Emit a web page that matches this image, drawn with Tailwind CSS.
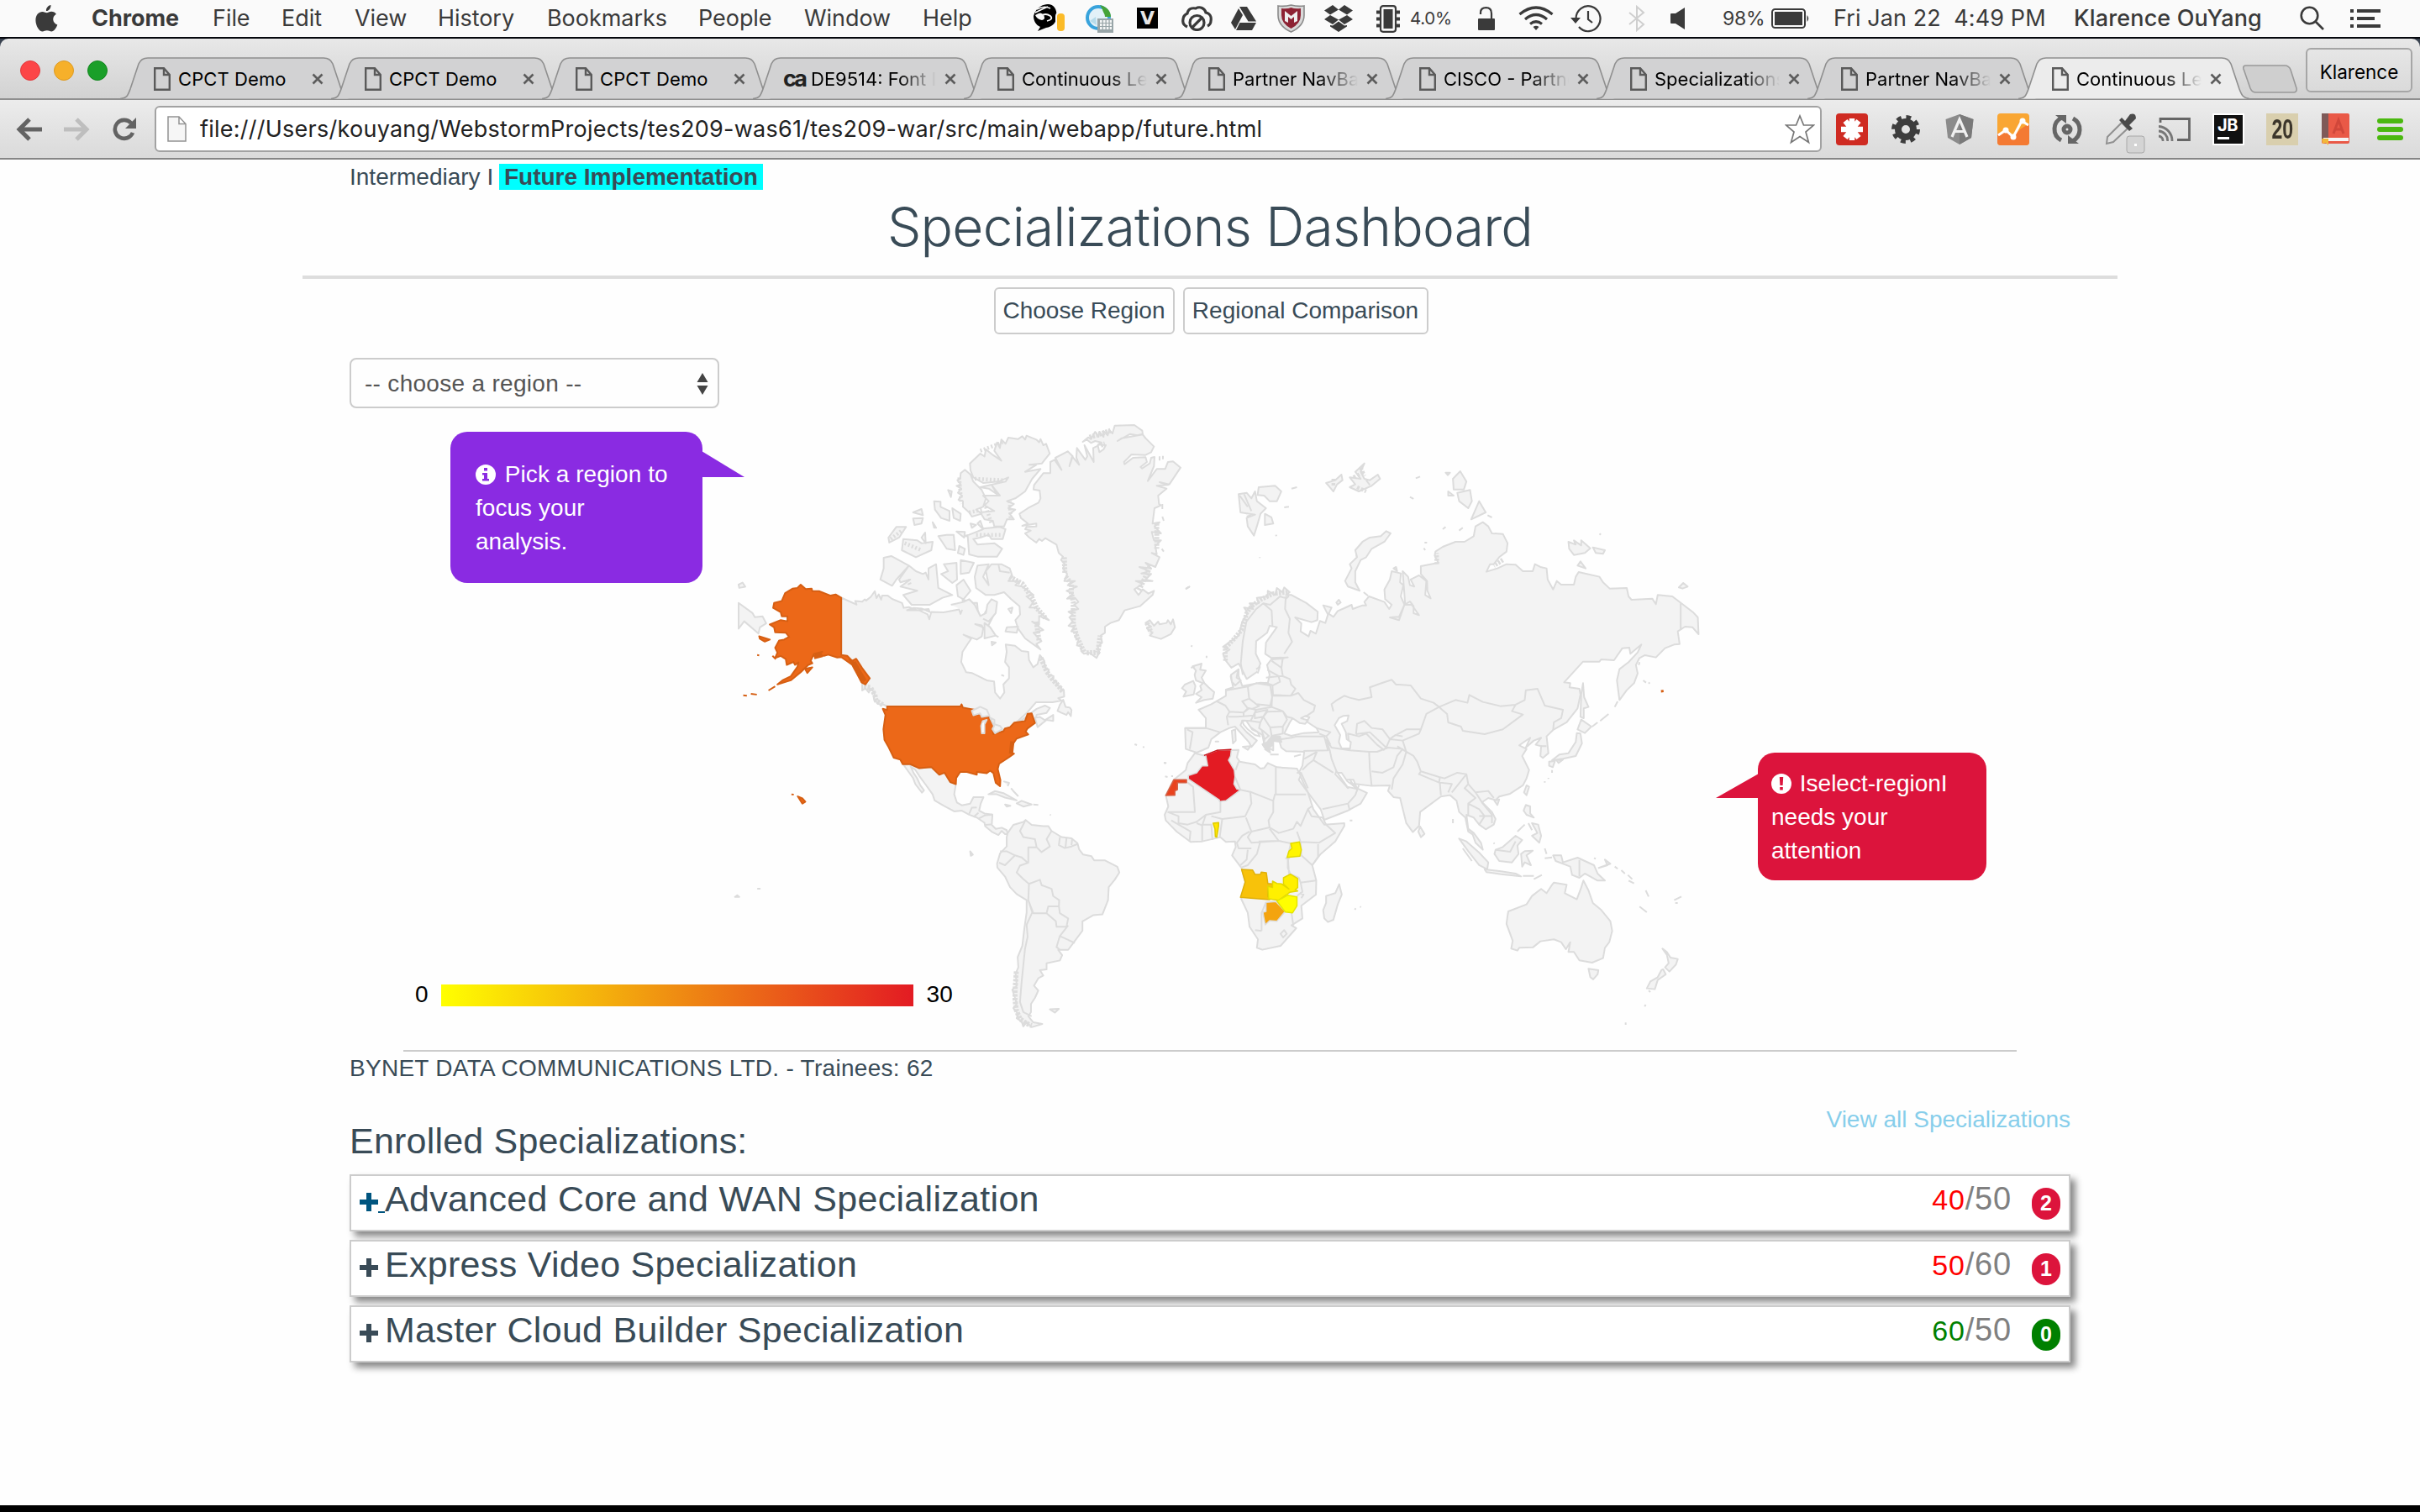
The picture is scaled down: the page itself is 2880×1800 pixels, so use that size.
<!DOCTYPE html>
<html lang="en">
<head>
<meta charset="utf-8">
<title>Specializations Dashboard</title>
<script src="https://cdn.jsdelivr.net/npm/@tailwindcss/browser@4"></script>
</head>
<body class="w-[2880px] h-[1800px] overflow-hidden bg-[#fefefe] font-['Liberation_Sans',Arial,sans-serif] text-[28px] leading-[40px] text-[#394b57]">

<!-- Symbols reused by the tabs -->
<svg class="hidden">
  <symbol id="page" viewBox="0 0 20 28"><path d="M1.2 1.2H12L18.8 9V26.8H1.2Z M12 1.2V9H18.8" fill="none" stroke="#5a5a5a" stroke-width="2.4"/></symbol>
  <symbol id="x" viewBox="0 0 16 16"><path d="M2.5 2.5L13.5 13.5M13.5 2.5L2.5 13.5" stroke="#5c5c5c" stroke-width="2.6"/></symbol>
  <symbol id="tab" viewBox="0 0 275 50"><path d="M0 49.5C8 49 9 46 12 38L22 8Q25 1 33 1H242Q250 1 253 8L263 38C266 46 268 49 275 49.5" stroke="#8f8f8f" stroke-width="1.6"/></symbol>
  <symbol id="plus" viewBox="0 0 22 22"><path d="M8 0H14V8H22V14H14V22H8V14H0V8H8Z"/></symbol>
</svg>

<!-- System menu bar -->
<header class="flex h-[46px] items-center border-b-2 border-[#05070d] bg-[#fafafa] pl-[42px] font-[Inter,sans-serif] text-[27px] leading-[44px] tracking-[-0.05px] whitespace-nowrap text-[#3a3a3a]">
  <div class="w-[67px]"><svg width="27" height="34" viewBox="0 0 27 34" fill="#3a3a3a"><path d="M18.5 1c.4 3.600-2.400 7.200-5.500 7.100C12.600 4.600 15.400 1.400 18.500 1ZM13.700 10.300c1.300 0 3-1.500 5.500-1.500 2.500 0 4.500 1.200 5.700 2.900-5.500 3.300-4.600 10.600 1.400 12.800-1.400 4-4.200 8-7 8-2 0-2.900-1.200-5.400-1.200S10.400 32.500 8.600 32.500C4.600 32.500.4 25.400.4 18.900c0-6.400 4-9.900 8-9.900 2.400 0 4 1.300 5.300 1.300Z"/></svg></div>
  <div class="w-[144px] font-bold">Chrome</div>
  <div class="w-[82px]">File</div>
  <div class="w-[87px]">Edit</div>
  <div class="w-[99px]">View</div>
  <div class="w-[130px]">History</div>
  <div class="w-[180px]">Bookmarks</div>
  <div class="w-[126px]">People</div>
  <div class="w-[141px]">Window</div>
  <div class="w-[132px]">Help</div>
  <div class="w-[62px]"><svg width="38" height="34" viewBox="0 0 38 34"><path d="M0 14C3 3 12 0 17 0C24 0 28 6 27.500 14C27.500 22 22 27 15 28L5 32L8 27C3 25 0 20 0 14Z" fill="#000"/><path d="M2 10Q10 6 17 3M4 6Q13 1 20 5" stroke="#fafafa" stroke-width="1.600" fill="none"/><path d="M2 13Q9 8 12 13Q15 18 10 19Q4 18 2 13Z" fill="#fafafa"/><path d="M9 14Q14 10 20 14Q24 18 16 20" stroke="#fafafa" stroke-width="1.800" fill="none"/><rect x="26" y="9" width="12" height="25" rx="5" fill="#fafafa"/><rect x="28" y="11" width="9" height="21" rx="4" fill="#fbbb28"/></svg></div>
  <div class="w-[61px]"><svg width="34" height="34" viewBox="0 0 34 34"><circle cx="15" cy="16" r="13" fill="#e2f1f8" stroke="#38a3dc" stroke-width="4"/><path d="M17 1C26 3 30 9 30 15H23C23 11 20 9 20 6Z" fill="#45a338"/><path d="M5 20L12 15L13 25Z" fill="#b6dbea"/><rect x="14" y="17" width="19" height="17" fill="#98a5a8"/><path d="M17 20.500H31M17 24.500H31M17 28.500H31" stroke="#f4f6f6" stroke-width="3" stroke-dasharray="2.600 1.300"/></svg></div>
  <div class="w-[53px]"><div class="h-[25px] w-[25px] -translate-y-px bg-black text-center font-['DejaVu_Sans',sans-serif] text-[22px] leading-[25px] font-bold text-[#e6e6e6]">V</div></div>
  <div class="w-[59px]"><svg width="37" height="30" viewBox="0 0 37 30" fill="none" stroke="#3a3a3a" stroke-width="3.200"><path d="M7 25C3 23 1 20 2 16C2 12 5 10 7 9C8 4 12 2 17 3C22 0 28 3 29 8C34 9 36 13 35 18C35 21 33 23 31 24"/><circle cx="18.500" cy="20" r="8.500"/><path d="M13 25.500L24 14.500"/></svg></div>
  <div class="w-[55px]"><svg width="31" height="28" viewBox="0 0 31 28" fill="#3a3a3a"><path d="M10 0H19L30 17.500H20.500Z"/><path d="M9 2L14 10L5 27L0 19Z"/><path d="M10.500 19H30L25 28H6Z"/></svg></div>
  <div class="w-[56px]"><svg width="33" height="34" viewBox="0 0 33 34"><path d="M1 2Q9 3 16.500 1Q24 3 32 2V13Q32 26 16.500 33Q1 26 1 13Z" fill="#d9d9d9" stroke="#8b8b8b" stroke-width="1.600"/><path d="M5 5Q12 6 16.500 4Q21 6 28 5V13Q28 23 16.500 29Q5 23 5 13Z" fill="#8d2233"/><path d="M9 20V8L16.500 14L24 8V20L20 22V15L16.500 18L13 15V22Z" fill="#eee"/></svg></div>
  <div class="w-[62px]"><svg width="34" height="32" viewBox="0 0 34 32" fill="#3a3a3a"><path d="M10 0L17 5.500L7 11.500L0 6.500ZM24 0L34 6.500L27 11.500L17 5.500ZM7 12L17 17.500L10 23L0 17ZM27 12L34 17L24 23L17 17.500ZM17 19.500L24 24.500L27 24V25.500L17 32L7 25.500V24L10 24.500Z"/></svg></div>
  <div class="w-[40px]"><svg width="28" height="33" viewBox="0 0 28 33"><path d="M0 8.500H28M0 16.500H28M0 24.500H28" stroke="#3a3a3a" stroke-width="4"/><rect x="5" y="1.200" width="18" height="30.600" rx="3" fill="#fafafa" stroke="#3a3a3a" stroke-width="2.200"/><rect x="8.500" y="5" width="11" height="23" fill="#3a3a3a"/></svg></div>
  <div class="w-[81px] text-[20.5px] tracking-[-0.3px]">4.0%</div>
  <div class="w-[48px]"><svg width="21" height="28" viewBox="0 0 21 28"><rect y="14" width="20" height="14" rx="1" fill="#3a3a3a"/><path d="M3 9V7Q3 1.200 9.500 1.200T16 8V14" fill="none" stroke="#3a3a3a" stroke-width="2.200"/></svg></div>
  <div class="w-[62px]"><svg width="42" height="30" viewBox="0 0 42 30" fill="none" stroke="#3a3a3a" stroke-width="3.200"><path d="M1.500 10Q21 -6 40.500 10M8 16Q21 5 34 16M14 21.500Q21 16 28 21.500"/><path d="M17.500 25Q21 22.500 24.500 25L21 29Z" fill="#3a3a3a" stroke="none"/></svg></div>
  <div class="w-[69px]"><svg width="38" height="34" viewBox="0 0 38 34" fill="none" stroke="#3a3a3a" stroke-width="2.200"><path d="M6.500 17A14.500 15 0 1 1 10 27"/><path d="M0 16H12L6 23Z" fill="#3a3a3a" stroke="none"/><path d="M21 8V18L26 22"/></svg></div>
  <div class="w-[50px]"><svg width="20" height="32" viewBox="0 0 20 32" fill="none" stroke="#cfcfcf" stroke-width="2"><path d="M1 9L18 23L10 30V2L18 9L1 23"/></svg></div>
  <div class="w-[62px]"><svg width="17" height="26" viewBox="0 0 17 26"><path d="M0 8Q0 7 1 7H6L17 0V26L6 19H1Q0 19 0 18Z" fill="#3a3a3a"/></svg></div>
  <div class="w-[58px] text-[23px] tracking-[-0.3px]">98%</div>
  <div class="w-[74px]"><svg width="46" height="24" viewBox="0 0 46 24"><rect x="1" y="1" width="39" height="22" rx="3.500" fill="none" stroke="#3a3a3a" stroke-width="2"/><rect x="4" y="4" width="33" height="16" fill="#3a3a3a"/><path d="M42.500 8Q46 12 42.500 16Z" fill="#3a3a3a"/></svg></div>
  <div class="w-[286px] tracking-[0.1px] whitespace-pre">Fri Jan 22  4:49 PM</div>
  <div class="w-[269px] font-medium tracking-[0.15px]">Klarence OuYang</div>
  <div class="w-[60px]"><svg width="30" height="30" viewBox="0 0 30 30" fill="none" stroke="#3a3a3a" stroke-width="2.600"><circle cx="11.500" cy="11.500" r="9.800"/><path d="M18.500 18.500L28 28"/></svg></div>
  <div><svg width="37" height="22" viewBox="0 0 37 22" fill="none" stroke="#3a3a3a" stroke-width="4"><path d="M0 2H4M8 2H36M0 11H4M8 11H29M0 20H4M8 20H36"/></svg></div>
</header>

<div class="bg-[#3a4350]">
<!-- Tab strip -->
<div class="flex h-[73px] items-end rounded-t-[10px] bg-linear-to-b from-[#e8e8e8] to-[#d2d2d2] border-b-2 border-[#8f8f8f] pl-6 font-[Inter,sans-serif] text-[22px] leading-[30px] whitespace-nowrap text-black">
  <div class="mb-[21px] flex gap-4 pr-[15px]">
    <div class="size-6 rounded-full border border-[#e0383c] bg-[#fc4547]"></div>
    <div class="size-6 rounded-full border border-[#dd9a22] bg-[#f6b02a]"></div>
    <div class="size-6 rounded-full border border-[#148620] bg-[#1a9f29]"></div>
  </div>
  <div id="tabs" class="flex h-[49px]"></div>
  <svg class="ml-4 mb-[6px]" width="66" height="34" viewBox="0 0 66 34"><path d="M4 1H50Q55 1 57 6L64 28Q65 33 60 33H16Q11 33 9 28L1 5Q0 1 4 1Z" fill="#cfcfcf" stroke="#999" stroke-width="1.600"/></svg>
  <div class="mb-[7px] ml-[9px] h-[53px] w-[127px] rounded-md border-2 border-[#a6a6a6] bg-linear-to-b from-[#e6e6e6] to-[#dadada] text-center text-[22.5px] leading-[54px]">Klarence</div>
</div>
</div>

<!-- Toolbar -->
<div class="flex h-[71px] items-center border-b-2 border-[#858585] bg-linear-to-b from-[#ececec] to-[#dadada] pl-[19px]">
  <svg class="mr-6" width="32" height="28" viewBox="0 0 32 28" fill="none" stroke="#636363" stroke-width="5"><path d="M16 2L4 14L16 26M4 14H31"/></svg>
  <svg class="mr-[27px]" width="32" height="28" viewBox="0 0 32 28" fill="none" stroke="#bebebe" stroke-width="5"><path d="M16 2L28 14L16 26M28 14H1"/></svg>
  <svg class="mr-[21px]" width="29" height="28" viewBox="0 0 29 28"><path d="M24 18A11 11 0 1 1 22 6.500" fill="none" stroke="#636363" stroke-width="4.600"/><path d="M28 0V13H15Z" fill="#636363"/></svg>
  <div class="flex h-[55px] w-[1984px] items-center rounded-[6px] border-2 border-[#a2a2a2] bg-white pr-[6px] pl-[13px] font-[Inter,sans-serif] text-[27px] tracking-[0.25px] text-[#222]">
    <svg class="mr-4" width="23" height="31" viewBox="0 0 23 31"><path d="M1 1H14L22 9.500V30H1Z M14 1V9.500H22" fill="#f6f6f6" stroke="#929292" stroke-width="1.500"/></svg>
    <span id="url" class="flex-1 whitespace-nowrap">file:///Users/kouyang/WebstormProjects/tes209-was61/tes209-war/src/main/webapp/future.html</span>
    <svg width="36" height="36" viewBox="0 0 36 36"><path d="M18 2L22.500 13H34.500L25 21L28.500 33.500L18 26.500L7.500 33.500L11 21L1.500 13H13.500Z" fill="#fff" stroke="#777" stroke-width="1.700"/></svg>
  </div>
  <div class="flex pl-[4px]">
    <div class="flex w-16 justify-center"><svg width="38" height="38" viewBox="0 0 38 38"><rect width="38" height="38" rx="4" fill="#cf2b22"/><path d="M19 6V32M6 19H32M11 9L27 29M27 9L11 29" stroke="#fff" stroke-width="6.500"/></svg></div>
    <div class="flex w-16 justify-center"><svg width="38" height="38" viewBox="0 0 38 38"><circle cx="19" cy="19" r="14" fill="none" stroke="#3d3d3d" stroke-width="6" stroke-dasharray="5.500 5.500"/><circle cx="19" cy="19" r="9" fill="none" stroke="#3d3d3d" stroke-width="8"/></svg></div>
    <div class="flex w-16 justify-center"><svg width="36" height="38" viewBox="0 0 36 38"><path d="M18 1L34.500 7L32 29L18 37L4 29L1.500 7Z" fill="#8b8b8b"/><path d="M18 1V37L32 29L34.500 7Z" fill="#7a7a7a"/><path d="M9 28L18 7L27 28M12.500 21.500H23.500" fill="none" stroke="#f0f0f0" stroke-width="3.200"/></svg></div>
    <div class="flex w-16 justify-center"><svg width="38" height="38" viewBox="0 0 38 38"><rect width="38" height="38" rx="4" fill="#f9a633"/><path d="M0 24L10 20L19 28L27 19L38 12V34Q38 38 34 38H4Q0 38 0 34Z" fill="#f47a33"/><path d="M1 26L10 20L19 28L29 9L37 14" fill="none" stroke="#fff" stroke-width="3"/><circle cx="10" cy="20" r="3.500" fill="#fff"/><circle cx="19" cy="28" r="3.500" fill="#fff"/><circle cx="30" cy="9" r="3.500" fill="#fff"/></svg></div>
    <div class="flex w-16 justify-center"><svg width="38" height="38" viewBox="0 0 38 38" fill="none" stroke="#666" stroke-width="5"><path d="M13 5A15 15 0 0 0 12 32M25 33A15 15 0 0 0 26 6"/><circle cx="19" cy="19" r="4"/><path d="M5 2H18V12Z M33 36H20V26Z" fill="#666" stroke="none"/></svg></div>
    <div class="flex w-16 justify-center"><svg class="overflow-visible" width="38" height="38" viewBox="0 0 38 38"><path d="M2 36L3 28L20 11L27 18L10 34Z" fill="#e2e2e2" stroke="#909090" stroke-width="2"/><path d="M17 8L20 5L24 9L30 1Q37 -1 37 6L29 14L33 18L29 21Z" fill="#4b4b4b"/><rect x="26" y="27" width="21" height="20" rx="3" fill="#d4d4d4" stroke="#a8a8a8"/><rect x="35" y="36" width="3" height="3" fill="#fff"/></svg></div>
    <div class="flex w-16 items-center justify-center"><svg width="38" height="28" viewBox="0 0 38 28" fill="none" stroke="#666" stroke-width="2.800"><path d="M2 6V1.500H36.500V26.500H22"/><path d="M0 10.500A17 17 0 0 1 16 28M0 16A11 11 0 0 1 10.500 28M0 22A5.500 5.500 0 0 1 5 28" stroke="#777"/></svg></div>
    <div class="flex w-16 justify-center"><div class="relative size-[38px] border-2 border-white bg-[#111] pl-1 font-[Inter,sans-serif] text-[20px] leading-[24px] font-bold tracking-[-0.5px] text-white">JB<div class="absolute bottom-[5px] left-[4px] h-[3px] w-[14px] bg-white"></div></div></div>
    <div class="flex w-16 justify-center"><div class="size-[38px] bg-[#d9cfae] text-center text-[33px] leading-[38px] font-bold text-[#3c362b]"><span class="-mx-2 inline-block scale-x-70">20</span></div></div>
    <div class="flex w-16 justify-center"><svg width="34" height="38" viewBox="0 0 34 38"><rect width="33" height="36" rx="2" fill="#e95947"/><rect width="8" height="32" fill="#7f5a58"/><path d="M2 31H32" stroke="#f5f5f5" stroke-width="4"/><path d="M0 30H8V38L5 35L1 36Z" fill="#f2b83a"/><path d="M14 24L20 8L26 24M16 19H24" fill="none" stroke="#d0473a" stroke-width="3"/></svg></div>
    <div class="flex w-16 flex-col items-center justify-center gap-1"><i class="h-[6px] w-[31px] rounded-sm bg-[#4ab80f]"></i><i class="h-[6px] w-[31px] rounded-sm bg-[#4ab80f]"></i><i class="h-[6px] w-[31px] rounded-sm bg-[#4ab80f]"></i></div>
  </div>
</div>

<!-- Page -->
<main class="mx-auto flex h-[1602px] w-[2160px] flex-col whitespace-nowrap">
  <div class="h-10 px-14 leading-[41px]">Intermediary I <b class="ml-[-1px] bg-[#00ffff] px-[6px]">Future Implementation</b></div>
  <h1 class="h-[98px] text-center font-[Inter,sans-serif] text-[64px] leading-[79px] font-light tracking-[-0.75px]"><span id="h1">Specializations Dashboard</span></h1>
  <div class="h-1 shrink-0 bg-[#ddd]"></div>
  <div class="flex justify-center gap-[10px] pt-[10px] pl-[2px]">
    <button class="h-[56px] w-[215px] rounded-[6px] border-2 border-[#ccc] leading-[52px]">Choose Region</button>
    <button class="h-[56px] w-[292px] rounded-[6px] border-2 border-[#ccc] leading-[52px]">Regional Comparison</button>
  </div>
  <div class="mx-14 mt-7 flex h-[60px] w-[440px] shrink-0 items-center justify-between rounded-lg border-2 border-[#ccc] pt-px pr-[11px] pl-4 tracking-[0.3px] text-[#555]">-- choose a region --
    <svg width="14" height="26" viewBox="0 0 14 26" fill="#444"><path d="M7 0L13.500 11H.5ZM7 26L13.500 15H.5Z"/></svg>
  </div>

  <section class="relative h-[764px] shrink-0">
    <svg class="ml-[500px] [&_path]:[vector-effect:non-scaling-stroke]" width="1190" height="764" viewBox="860 486 1190 764" fill="#f3f3f3" stroke="#dcdcdc" stroke-width="2" stroke-linejoin="round">
      <!-- Americas -->
      <g transform="translate(860 490) scale(.3954 .4847)">
        <path d="M357 457L403 474 399 465 420 467 428 461 432 464 446 455 458 441 463 458 470 449 477 462 480 452 497 452 510 460 540 470 545 482 560 480 585 488 620 485 623 492 600 484 575 482 555 488 592 488 617 498 622 510 628 492 665 493 685 490 712 486 716 497 725 478 722 462 745 466 752 470 766 470 768 488 775 503 785 503 792 490 797 500 805 495 803 475 820 467 822 478 812 490 818 497 800 525 795 535 785 535 780 525 760 522 785 530 780 552 765 560 725 548 748 558 738 570 722 590 718 615 733 640 750 642 795 660 817 663 820 690 835 705 848 690 845 670 862 655 862 628 850 615 855 590 852 572 880 575 900 588 920 590 922 610 935 628 948 620 955 598 968 612 970 628 982 634 978 645 996 650 992 658 1005 662 1005 672 1020 676 1018 684 1027 684 1028 700 1010 704 1020 710 993 714 943 714 918 738 883 764 893 762 945 730 970 722 985 728 975 740 945 745 940 765 880 772 820 792 805 752 720 724 500 726 485 720 468 718 455 705 458 690 443 680 440 690 430 680 420 685 420 660 400 620 357 600Z"/>
        <path d="M1008 735L1015 720 1025 708 1032 725 1045 727 1050 733 1048 748 1040 738 1035 745 1020 740ZM940 752L955 750 970 758 995 745 995 760 975 757 948 775ZM48 470L90 495 97 505 120 503 131 520 112 530 108 545 65 515 48 533ZM48 425L60 420 68 430 50 433ZM800 940L820 932 845 937 885 955 850 948 825 940ZM885 962L900 956 930 965 905 970ZM850 965L866 968 855 970ZM745 1080L753 1088 747 1091ZM37 1192L44 1188 50 1192ZM106 1172H112ZM985 1468L1012 1467 1000 1476ZM935 965L950 966M985 990L988 991M1395 435L1405 430ZM1240 817L1247 819M1265 823L1269 825M1328 862L1334 864M845 908L862 912 858 920M868 925L875 932 890 945"/>
        <path d="M545 868L565 866 592 876 628 873 652 892 668 887 685 910 702 915 697 940 705 960 720 967 745 963 755 947 785 947 777 962 772 980 788 987 812 990 810 1015 822 1025 840 1022 855 1028 858 1038 850 1038 840 1030 830 1040 812 1033 790 1018 788 1010 765 997 742 990 720 980 697 982 665 968 638 955 632 940 610 915 592 895 580 880 565 870 575 888 585 900 595 918 606 930 600 936 580 915 573 900 560 885Z"/>
        <path d="M742 988L750 973 765 972M755 996L770 985M770 1000L788 992 812 990M790 1015L808 1014" fill="none"/>
        <path d="M858 1035L875 1015 905 1008 912 1003 930 1015 965 1018 980 1018 990 1030 1020 1045 1050 1048 1068 1060 1073 1075 1085 1088 1110 1092 1118 1102 1150 1102 1188 1118 1194 1132 1180 1150 1162 1168 1160 1200 1143 1235 1115 1237 1083 1252 1083 1275 1060 1300 1040 1322 1010 1322 1022 1335 1015 1348 975 1355 975 1370 955 1372 965 1385 950 1392 937 1410 950 1422 940 1440 928 1455 928 1475 920 1485 935 1500 962 1504 930 1512 915 1500 905 1510 900 1498 885 1490 890 1480 875 1465 885 1455 880 1440 872 1420 885 1410 882 1380 890 1365 888 1340 902 1312 908 1270 915 1230 915 1200 885 1185 865 1168 850 1142 827 1120 826 1110 835 1085 855 1068 855 1045Z"/>
        <path d="M920 1200L932 1230 915 1260 918 1290 910 1320 905 1360 900 1400 895 1450 905 1475 930 1485M922 1160L955 1150 960 1163 990 1172 995 1190 1013 1200 1012 1215 980 1215 975 1232 935 1232 920 1200ZM975 1232L1003 1252 1005 1265 1035 1265 1040 1245 1015 1232 1012 1215M1040 1262L1015 1288 1060 1305M1015 1288L1005 1315 1015 1322M922 1160L905 1148 885 1132 895 1115 920 1108 920 1070 945 1070M835 1080L855 1080 880 1090 900 1095 918 1108M912 1003L895 1030 905 1045 940 1050 945 1070 960 1082 985 1068 975 1050 990 1030M1015 1045L1012 1065 1030 1072 1050 1068 1068 1062M1035 1047L1032 1070M1052 1050L1050 1065M832 1108L850 1114 880 1090" fill="none"/>
        <!-- Fjord coasts: British Columbia, Labrador, Patagonia -->
        <path d="M425 675L445 678 458 695 462 710 485 722M958 605L975 638 990 655 1012 675 1025 690M884 1375L880 1420 880 1445 884 1470 895 1492 915 1503 930 1508" fill="none" stroke-width="6" stroke-dasharray="3 1.500"/>
        <g fill="#ec6818" stroke="#d65f13">
          <path d="M495 724L716 724 719 719 723 727 770 734 755 746 775 743 780 750 800 750 817 770 812 780 815 792 845 785 850 778 865 775 878 764 910 760 918 742 930 741 940 765 918 778 912 786 920 793 885 803 875 815 870 825 870 838 877 840 860 850 832 865 828 878 836 905 835 920 822 912 815 888 805 882 795 888 765 885 765 892 735 885 715 885 703 900 702 915 685 910 668 887 652 892 628 873 592 876 565 866 542 866 535 855 515 850 500 825 487 806 484 780 490 745 482 730 495 733Z"/>
          <path d="M357 457L340 449 325 452 290 441 270 441 268 435 250 436 235 425 225 433 210 435 188 446 178 465 155 470 152 482 175 493 178 503 195 503 195 515 175 512 142 523 155 530 158 542 190 543 200 553 185 560 170 562 158 580 165 592 158 605 175 600 190 608 193 622 213 615 218 622 228 616 225 627 205 650 180 660 165 670 205 660 235 640 258 622 270 618 265 612 275 595 300 590 275 600 305 600 318 597 345 604 357 603 390 622 405 645 418 665 430 670 443 655 420 630 402 607 390 612 375 600 357 598Z"/>
          <path d="M380 608L425 655M390 610L420 662M248 632L270 628 255 642ZM110 552L142 560 127 565 112 558ZM150 600L160 608M138 685L158 675M85 693L103 695M62 697L73 698M226 945L240 950 249 958 240 963ZM207 940L214 941M104 598L110 599"/>
          <path d="M395 615L412 640 428 662M872 810L868 840M275 603L300 598" fill="none" stroke-width="5"/>
        </g>
        <path d="M750 735L775 725 795 732 803 747 780 750 775 741 755 746ZM780 790L778 772 783 760 795 757 788 768 788 790ZM805 752L818 757 818 768 835 772 842 780 820 790 812 780 817 772Z" fill="#f3f3f3"/>
        <path d="M783 788L784 765" stroke="#fff"/>
      </g>
      <!-- Arctic Canada, Greenland, Iceland -->
      <g transform="translate(1020 490) scale(.3333)">
        <path d="M705 172L730 208 708 165 752 142 770 160 758 195 768 160 793 190 783 165 785 130 815 172 822 160 812 120 845 180 843 130 860 122 865 145 880 135 888 120 860 118 872 110 850 105 835 112 820 100 806 108 825 92 835 98 850 72 862 90 865 72 880 90 880 70 895 85 900 65 912 78 920 50 990 48 1018 68 1020 80 1000 85 975 80 930 105 945 95 1020 82 1030 95 1060 125 1050 145 1030 155 980 153 953 180 955 188 985 165 1030 163 1035 180 1012 198 1018 203 1045 185 1050 165 1062 162 1060 195 1038 248 1070 205 1100 205 1110 180 1128 178 1155 200 1115 260 1080 252 1110 262 1070 265 1105 275 1075 300 1078 330 1085 335 1062 345 1055 400 1080 395 1062 410 1085 435 1052 430 1060 460 1085 460 1065 480 1070 510 1052 505 1080 520 1065 555 1030 540 1050 560 1008 555 1045 570 1015 578 1050 580 1030 600 1055 605 995 605 1020 615 990 635 1005 655 1020 635 1040 650 1060 640 1055 655 1010 695 955 710 935 745 905 755 885 768 885 790 870 800 875 825 860 840 865 860 855 880 830 862 810 865 800 855 802 840 785 835 790 815 778 805 785 790 765 785 775 770 755 765 770 750 758 735 770 725 755 715 790 705 775 690 790 680 778 665 750 668 770 650 748 640 785 625 752 620 778 605 740 605 750 580 735 560 742 545 728 530 735 518 720 505 712 475 672 452 660 462 650 455 640 468 615 450 600 435 620 425 600 420 605 412 640 410 640 400 590 408 610 400 585 380 580 365 610 345 648 325 655 310 652 282 630 278 632 262 665 220 690 220 690 180Z"/>
        <path d="M403 185L440 150 455 160 460 135 485 155 515 175 490 140 500 110 510 130 515 100 530 115 540 93 575 98 590 88 600 100 605 86 640 100 650 110 655 98 665 120 675 115 688 150 660 185 615 190 640 190 600 215 655 205 625 240 600 285 565 310 535 320 560 330 540 345 565 350 545 365 560 385 535 385 525 410 490 410 485 390 455 385 440 360 490 355 455 335 470 320 450 300 510 300 480 262 500 295 470 275 440 270 530 250 540 235 505 250 450 255 415 235 405 210ZM385 208L405 225 415 250 445 280 460 310 450 340 425 350 445 365 410 375 400 360 378 340 378 320 362 315 375 300 360 290 372 275 355 265 370 260 358 245 368 240 370 220Z"/>
        <path d="M380 445L395 445 400 510 430 518 500 518 518 490 490 470 430 475 415 455 440 450 470 440 480 455 520 455 530 420 510 412 450 418 440 390 430 400 450 420 400 440ZM430 550L420 590 425 630 460 655 490 655 525 645 550 670 580 695 582 725 565 745 575 775 600 810 655 850 640 830 658 820 630 790 665 780 625 750 650 760 650 730 685 745 650 715 640 700 615 700 630 680 605 660 630 655 590 625 565 620 580 605 540 605 555 590 545 560 515 545 480 545 460 570 470 620 450 590 470 545ZM505 548L510 570 545 575M535 770L575 768 570 790 530 785Z"/>
        <path d="M185 550L150 600 155 610 190 600 155 625 215 640 165 655 195 690 260 690 305 665 340 655 290 630 282 545 255 560 255 600 245 575 235 580 210 570ZM95 522L122 516 185 550 140 600 125 622 83 600 95 560ZM310 545L355 540 357 600 340 612 300 580 325 570ZM370 530L417 540 400 575 370 580ZM355 620L380 600 405 640 380 670 360 660ZM165 455L215 460 230 470 270 465 265 495 210 520 160 495ZM140 412L175 412 150 450 115 468 112 450ZM200 382L235 380 230 400 205 405ZM200 360L230 348 235 370ZM275 320L298 322 298 340 330 355 330 390 300 380 278 350ZM340 345L370 365 368 390 345 380ZM355 428L385 430 382 450ZM290 445L320 440 345 440 350 495 320 490ZM365 480L385 490 380 512 360 505ZM230 450L243 432 245 470ZM325 280L338 285 335 305ZM270 395L282 415 275 415ZM405 400L425 405 410 415ZM455 755L475 770 495 800 455 810ZM480 822L495 825 482 835ZM335 690L380 680 400 670 420 690 440 730 460 720 465 690 480 670 500 680 495 720 470 750 450 740M540 705L555 700 550 720ZM505 805L495 800M515 940L525 945"/>
        <path d="M1030 755L1045 745 1060 765 1075 750 1080 760 1105 755 1110 745 1120 760 1128 742 1135 770 1120 795 1085 812 1045 800 1055 790 1035 775 1050 768ZM1175 632L1187 626M1080 160V175M1092 158V170M1090 330V348M1090 375L1095 390M1088 490L1095 500"/>
        <!-- Fjord texture -->
        <path d="M745 590L765 615 765 650 772 680 772 760 785 805 810 858M740 520L742 580M1070 400L1070 490M1045 555L1030 590 1005 640M830 92L905 68M870 120L885 115M820 862L860 860 868 800M545 590L590 615 625 665 640 700 675 740M640 750L650 820M1035 755L1050 790" fill="none" stroke-width="6" stroke-dasharray="2.500 1.500"/>
        <path d="M420 240L520 245M365 235L372 330M440 140L520 110M425 440L520 440M460 340L480 400M545 320L548 380M170 470L230 495M120 455L160 425M400 360L450 350M180 600L190 620" fill="none" stroke-width="4.500" stroke-dasharray="2 2.500"/>
      </g>
      <!-- Eurasia, northern half -->
      <g transform="translate(1370 490) scale(.4337 .3333)">
        <path d="M385 655L425 683 457 715 456 745 440 752 395 735 412 757 410 785 432 803 437 783 452 793 463 748 478 755 485 725 472 692 495 700 487 722 500 733 512 712 530 702 550 690 553 705 580 692 590 692 585 680 598 660 640 680 653 705 660 690 642 670 640 635 655 600 660 570 685 578 683 610 692 620 685 660 695 690 680 745 655 735 680 733 695 690 710 678 720 695 720 720 735 727 715 690 697 690 693 620 690 570 705 590 710 620 722 625 712 600 735 585 755 605 752 655 767 667 758 640 757 605 740 580 740 552 788 540 778 515 780 500 800 483 835 465 860 465 885 445 890 410 910 395 925 410 935 435 965 437 978 470 975 500 955 520 940 545 930 545 920 572 950 560 975 545 1000 547 1020 570 1047 570 1053 545 1068 555 1085 560 1088 600 1103 635 1113 605 1125 618 1160 618 1165 590 1173 573 1230 590 1240 610 1258 632 1305 630 1310 660 1318 672 1375 668 1385 688 1390 655 1430 660 1455 685 1488 718 1500 735 1502 795 1485 770 1465 768 1445 785 1450 830 1435 832 1410 845 1385 878 1355 870 1340 880 1330 905 1335 935 1325 970 1305 995 1285 1030 1278 960 1285 920 1310 895 1335 860 1345 832 1315 865 1312 843 1293 845 1270 888 1235 885 1230 893 1185 893 1133 967 1150 970 1148 985 1175 990 1178 1010 1170 1060 1140 1110 1103 1137 1085 1160 1090 1220 1075 1237 1068 1230 1070 1195 1055 1190 1070 1165 1050 1175 1028 1200 1040 1165 1010 1192 1030 1205 1018 1230 1037 1280 1030 1310 1020 1335 985 1365 955 1375 945 1388 925 1380 908 1395 935 1430 945 1455 940 1475 918 1492 900 1475 885 1450 865 1440 870 1490 885 1505 905 1540 910 1565 890 1540 882 1510 870 1500 862 1450 845 1430 838 1390 820 1370 795 1375 738 1430 735 1480 718 1502 700 1470 683 1380 665 1377 650 1355 655 1335 605 1337 560 1330 555 1315 535 1315 520 1300 508 1285 505 1295 530 1330 540 1345 558 1328 565 1345 592 1362 575 1400 540 1425 475 1458 465 1420 430 1360 410 1305 405 1290 415 1265 420 1215 370 1213 357 1200 350 1170 335 1165 335 1210 320 1200 310 1185 305 1155 270 1125 250 1105 245 1120 262 1145 290 1175 275 1198 268 1180 230 1125 215 1130 190 1145 165 1170 157 1200 125 1218 95 1205 93 1130 150 1130 150 1095 130 1065 165 1045 205 1015 205 993 225 985 218 945 240 920 240 945 250 980 300 968 320 970 325 940 318 905 330 885 360 882 375 878 330 880 313 865 315 825 345 770 325 765 318 790 288 820 287 865 300 900 290 930 262 955 247 915 240 900 220 915 205 890 197 865 215 850 197 840 240 800 250 750 265 720 255 700 280 705 270 685 295 685 290 665 320 660 320 640 340 655 345 630 360 645 365 628 380 645 370 655Z"/>
        <path d="M204 890L203 845 225 815 248 780 262 720 275 695 300 672 335 650 375 645M784 545L783 505M262 310L265 360 275 400M570 500L560 560M965 530L940 550" fill="none" stroke-width="5.500" stroke-dasharray="2.500 1.500"/>
        <path d="M240 295L262 290 275 310 285 285 290 320 315 345 300 365 290 410 282 443 265 410 262 380 285 368 245 360ZM243 300L265 340M255 295L275 355M295 270L340 265 357 285 345 320 325 320 310 300 292 298ZM312 365L330 378 335 400 312 405ZM572 640L540 625 532 605 550 560 545 545 565 520 560 495 580 465 600 450 630 445 645 427 657 435 640 465 605 490 590 520 575 530 560 570 560 610ZM480 255L505 245 522 225 525 245 510 260 500 285 485 262ZM560 215L585 185 575 215 585 240 600 245 622 225 628 240 605 265 570 285 545 270 560 260 545 235 575 240ZM590 245L600 262M828 240L848 213 865 250 858 278 830 278ZM840 290L875 280 880 320 870 345 845 320ZM815 285L830 300 815 300ZM878 385L900 320 918 360ZM808 218L820 218 814 227ZM923 370L935 378M726 238L738 232M710 305L720 312M385 275L400 270M365 342L378 340M1145 465L1165 475 1160 460 1180 478 1180 460 1205 488 1190 505 1160 512 1147 490ZM1212 485L1245 495 1240 508 1220 505ZM1170 550L1178 535 1192 560ZM1448 628L1460 612 1472 625 1458 632ZM1230 440L1234 436M508 682L515 672 520 682 512 690ZM665 560L672 555 675 570ZM583 645L595 658M845 425L855 415M800 420L808 412M750 468H757M748 488L752 495M97 632L102 626M109 836L113 839M152 872V880M298 520V523M342 440L344 445M1350 960L1358 968M1365 967L1368 972M1272 1055L1280 1035M1232 1105L1255 1080M1210 1125L1225 1110M1340 895L1338 905"/>
        <path d="M555 235L585 215M500 240L500 270M565 270L590 285M575 200L585 230" stroke-width="4.500" fill="none" stroke-dasharray="3 2"/>
        <path d="M1399 999L1406 998" stroke="#d65f13" stroke-width="3"/>
        <path d="M1453 685V780M500 1070L495 1045 510 1030 530 1015 545 1022 570 1030 605 1020 600 985 632 970 660 958 672 975 680 975 712 978 740 1025 775 1040 790 1055M790 1055L755 1080 740 1135 700 1135 665 1160 655 1170 635 1135 605 1130 585 1105 565 1115 562 1152M790 1055L835 1030 868 1040 873 1012 910 1037 958 1052 1000 1047 990 1070 1020 1082 965 1135 915 1152 855 1140 850 1125 815 1110 812 1080ZM1000 1047L1025 1030 1028 995 1060 990 1080 1050 1130 1065 1125 1095 1105 1110 1103 1137M740 1135L735 1150 690 1175 700 1215 720 1230 730 1250 740 1285 790 1305 805 1310 840 1290 865 1295 870 1330 890 1360 925 1355 940 1380M740 1285L735 1295 790 1325 792 1308M660 1350L665 1310 690 1260 700 1215 675 1195M795 1370L792 1325 825 1330 815 1360M825 1360L850 1320 865 1295M870 1330L860 1345 890 1380 870 1400 870 1440M890 1360L910 1400 935 1440 935 1470M870 1400L900 1420 915 1445 900 1475M900 1445H935M480 1170L495 1200 545 1210 598 1215 600 1275 605 1337M480 1170L490 1210 495 1240 510 1290M598 1215L620 1215 650 1200 690 1205 675 1230 665 1270 635 1290 605 1285M545 1210L540 1150 570 1160 590 1150 620 1190 640 1210M562 1152L600 1145 645 1200 655 1170M357 1170L385 1165 400 1160 475 1160 485 1210 418 1212M455 1215L445 1245 500 1290M415 1280L430 1260 445 1245M420 1240L455 1215M470 1420L540 1400 560 1370 570 1335M655 1170L690 1175M655 1170L670 1155 690 1160M540 1400L545 1425M1070 1195H1085" fill="none"/>
      </g>
      <!-- Africa, South Asia, Oceania -->
      <g transform="translate(1370 800) scale(.4337 .3333)">
        <path d="M120 290L150 300 190 280 240 278 235 305 243 320 285 330 300 345 310 343 320 325 345 340 400 345 410 370 405 385 430 430 445 490 475 545 530 540 530 550 505 605 465 650 442 690 453 745 452 795 412 835 415 880 385 905 398 915 355 978 305 992 290 985 293 955 270 910 265 860 247 810 258 750 248 700 222 655 232 625 230 605 205 607 190 590 140 605 108 607 70 570 40 530 37 510 47 480 40 440 62 385 95 350 100 325Z"/>
        <path d="M45 500L120 500 115 410 100 395M190 463L190 500 150 510 125 535 100 545 75 540 75 515 45 500M245 421L272 428 275 470 258 515 195 525 165 515M272 428L335 460 335 500 322 530 325 555 275 570 260 520M342 340L342 437 425 437M340 435L335 460M325 555L350 575 390 560 400 535 410 550 430 490 440 480M430 490L440 515 470 520 480 545 505 575 460 610 410 607 400 570M350 603L383 612 375 660 375 700 382 722M295 605L350 603M300 603L290 650 265 690 248 698M275 570L265 590 275 610 350 603 325 560M270 570L250 585 235 610 240 630 275 630M265 635L262 670 245 690M410 607L412 655 442 690 458 660 458 615M375 660L378 720 405 735 410 752 452 745M410 752L415 785 400 800M195 525L188 590M303 925L303 860 315 823M303 925L285 922M355 935L365 922 372 935 362 948ZM385 860L390 905M140 603L140 545 165 545 168 600M105 605L108 570 75 545M55 530L75 545M245 421L230 375M240 320L232 350M125 540L140 548 150 510M368 665L380 665M408 790L418 795 412 808" fill="none"/>
        <path d="M516 758L523 795 512 830 500 885 485 893 475 880 472 850 480 825 480 800 505 790ZM738 552L750 578 740 590 733 570ZM1185 40L1188 90 1200 125 1187 130 1187 165 1178 160 1180 80ZM1180 170L1208 195 1190 218 1170 205ZM1168 218L1178 220 1182 255 1165 300 1130 310 1100 315 1120 295 1145 290 1165 250ZM1092 320L1108 318 1102 340 1092 335ZM1112 315L1130 313 1118 325ZM1030 405L1037 410 1030 440 1023 430ZM942 460L955 455 950 475ZM1028 475L1040 480 1040 505 1050 520 1030 510 1022 495ZM1045 540L1062 545 1070 585 1065 610 1045 585 1060 575ZM1005 570L1025 545M1035 540L1045 565M945 635L965 625 1000 585 1018 600 1005 620 1008 650 990 680 955 675 942 650ZM845 595L865 605 900 645 925 680 922 705 900 690 870 640ZM915 705L960 712 1000 720 1015 730 960 722 920 715ZM1015 650L1025 640 1047 638 1030 655 1042 690 1025 680 1018 695ZM1050 740L1072 725M1020 728H1050M1080 630L1085 650M1080 665L1100 662M1103 655L1125 655 1130 680 1170 663 1215 690 1225 720 1245 745 1225 745 1190 720 1175 735 1155 725 1150 695 1110 675ZM1228 700L1260 685 1245 670 1252 690ZM980 855L1030 830 1045 800 1070 775 1085 790 1100 760 1105 752 1140 760 1135 790 1168 812 1180 770 1186 745 1200 780 1212 825 1235 850 1260 890 1265 925 1257 965 1245 985 1240 1022 1210 1038 1175 1030 1160 1000 1145 1000 1150 965 1138 990 1125 965 1105 955 1068 962 1048 983 1010 985 1005 995 988 988 992 960 975 900 978 870ZM1200 1060L1227 1065 1225 1080 1213 1098 1205 1090ZM1403 988L1415 1000 1425 1020 1445 1025 1440 1045 1422 1070 1410 1055 1420 1040 1415 1010ZM1405 1062L1412 1080 1390 1100 1382 1133 1360 1130 1370 1105 1390 1090 1400 1065ZM1272 695L1280 703M1290 708L1300 720M1308 725L1320 740M1310 745L1325 755M1357 780L1365 802M1340 838L1360 858M1435 815L1455 802M1438 825H1445M1354 1195L1357 1188M1302 1252V1260M1365 1138L1370 1143M545 530H552M558 845L562 848M573 838L576 840M828 525V540M855 630L880 675M1080 390V395M1090 378V382M1100 350V360M940 610L942 614M1215 665L1220 667M35 325H42M38 373L45 375M55 372H60"/>
        <path d="M945 635L985 642 1000 605M1175 672V730" fill="none"/>
        <g stroke-width="1.5">
          <path d="M145 298L180 280 220 277 218 300 212 315 228 350 230 375 227 400 235 418 245 421 205 460 188 463 187 457 102 382 102 370 125 360 140 335 155 335 150 300Z" fill="#e31b23" stroke="#dcdcdc"/>
          <path d="M145 298L180 280 220 277" fill="none" stroke="#c9161d"/>
          <path d="M62 385H97V395H72V420L65 425V440L40 441Z" fill="#e9421e" stroke="#d65f43"/>
          <path d="M170 540L185 538 185 550 180 590 176 588 175 560Z" fill="#ffe600" stroke="#e0cc00"/>
          <path d="M248 705L278 707 285 723 300 722 302 715 316 717 320 755 333 757 333 768 320 770 320 800 325 813 245 805 258 750Z" fill="#f8c20a" stroke="#e0b00a"/>
          <path d="M315 823L342 820 368 855 345 890 325 888 313 903 308 870 307 858 315 855Z" fill="#f4a40f" stroke="#dcdcdc"/>
          <path d="M383 612L407 607 412 635 408 658 373 662 378 640 386 630Z" fill="#fff500" stroke="#e3da00"/>
          <path d="M320 765L333 770 333 747 345 755 358 757 378 775 363 758 363 735 382 722 402 738 402 770 395 778 402 782 380 787 372 795 350 815 322 810Z" fill="#fff000" stroke="#e3d700"/>
          <path d="M345 818L375 797 400 803 400 835 388 860 368 857Z" fill="#ffff00" stroke="#e5e500"/>
        </g>
      </g>
      <!-- Europe detail -->
      <g transform="translate(1380 690) scale(.3333)">
        <path d="M445 550L465 510 475 495 500 512 520 515 530 503 505 495 520 487 535 492 525 507 560 530 568 545 515 548 470 558ZM640 495L655 487 675 485 670 505 650 515 665 545 668 570 683 580 680 603 650 603 640 580 645 555 625 520ZM635 690L650 690 670 720 695 738 680 715 690 735 705 748 670 740Z" fill="#fefefe"/>
        <path d="M118 310L150 300 145 322 165 325 150 350 160 370 175 385 195 402 190 425 160 430 130 440 150 420 130 408 150 395 145 380 155 370 130 360 125 340 130 325ZM90 375L120 362 128 380 122 410 85 418 95 400 80 388ZM255 340L280 322 275 350 290 360 270 378 258 365ZM258 540L270 535 272 575 262 585ZM200 578H210ZM297 597L325 595 315 608ZM395 625H425M480 632L505 625M345 320L358 312 350 335M112 315L125 310"/>
        <path d="M297 340L290 300 297 220 310 150 345 105 370 85 400 110 403 165M370 85L395 90 430 60 445 65 460 60 450 70 448 105 465 140 460 190 473 222 445 265M440 280L435 315 440 345 425 345 385 322M400 290L435 315M380 350L425 345 430 365 405 378 378 368M440 345L465 355 470 375 485 390 468 415 405 412 403 378M315 382L345 370 395 378 402 420 395 450 345 445 320 425ZM240 395L315 382M320 425L295 435 315 460 300 475 250 472M402 415L468 415 495 405 515 430 555 450 550 470 520 490M402 415L400 455 440 470 455 490 475 495M345 445L355 452 330 462 315 458M300 475L320 460 345 465 335 485 300 488ZM345 465L400 455M340 475L385 465 370 490 340 495ZM370 490L385 472 440 470 455 500 440 525 395 528ZM395 528L440 525 440 550 400 558ZM250 472L240 490 245 520M250 472L235 450 205 435M92 530H165L215 545M98 535L118 545 108 605M245 490H275L300 488M325 505L360 510 355 530 375 545 390 558 375 570 365 540M560 530L610 545 595 560 570 550M595 560L610 590M335 485L325 505 300 503M300 503L330 540 355 555M360 510L370 490M375 570L370 590" fill="none"/>
        <path d="M295 503L310 505 330 535 350 545 358 560 340 555 315 535 300 518Z" fill="#fefefe"/>
        <path d="M365 590L385 580 400 560 430 560 435 580 400 575 405 590 390 600 395 618 375 605" fill="#dcdcdc"/>
        <path d="M490 690L505 690 530 745" fill="none"/>
      </g>
    </svg>

    <!-- Hint callouts -->
    <div class="absolute top-[28px] left-[176px] h-[180px] w-[300px] rounded-[20px] bg-[#8a2be2] pt-[31px] pl-[30px] tracking-[0.05px] whitespace-normal text-white">
      <svg class="mr-[3px] mb-1 inline" width="24" height="24" viewBox="0 0 24 24"><circle cx="12" cy="12" r="12" fill="#fff"/><path d="M10 4H14V7.500H10ZM8 10H14V17H16V19.500H8V17H10V12.500H8Z" fill="#8a2be2"/></svg> Pick a region to<br>focus your<br>analysis.
      <svg class="absolute top-[23px] left-[299px]" width="51" height="31" viewBox="0 0 51 31"><path d="M0 0L51 31H0Z" fill="#8a2be2"/></svg>
    </div>
    <div class="absolute top-[410px] left-[1732px] h-[152px] w-[272px] rounded-[20px] bg-[#dc143c] pt-[17px] pl-4 whitespace-normal text-white">
      <svg class="mr-[2px] mb-1 inline" width="24" height="24" viewBox="0 0 24 24"><circle cx="12" cy="12" r="12" fill="#fff"/><path d="M9.800 4H14.200L13.600 14H10.400ZM10.200 16H13.800V19.500H10.200Z" fill="#dc143c"/></svg> Iselect-regionI<br>needs your<br>attention
      <svg class="absolute top-[25px] left-[-50px]" width="51" height="29" viewBox="0 0 51 29"><path d="M51 0L0 29H51Z" fill="#dc143c"/></svg>
    </div>
    <!-- Colour scale -->
    <div class="absolute top-[678px] left-[134px] flex items-center text-black">
      <span class="mr-[15px]">0</span>
      <div class="mt-[5px] mb-1 mr-4 h-[26px] w-[562px] bg-linear-to-r/srgb from-[#ffff00] via-[#ef8c12] to-[#e31b23]"></div>
      <span>30</span>
    </div>
  </section>

  <div class="mx-[120px] h-[2px] shrink-0 bg-[#ccc]"></div>
  <div class="px-14 tracking-[0.28px]">BYNET DATA COMMUNICATIONS LTD. - Trainees: 62</div>
  <div class="flex h-[106px] shrink-0 justify-between px-14">
    <h2 class="pt-[36px] text-[43px] leading-[60px] tracking-[0.2px]">Enrolled Specializations:</h2>
    <a class="pt-[21px] text-[#87ceeb]">View all Specializations</a>
  </div>
  <div id="rows" class="flex flex-col gap-[10px] px-14"></div>
</main>
<div class="fixed bottom-0 h-2 w-full bg-black"></div>

<script>
  const tabs = ['CPCT Demo', 'CPCT Demo', 'CPCT Demo', 'DE9514: Font Icons', 'Continuous Learning', 'Partner NavBar test', 'CISCO - Partner Ed', 'Specializations D', 'Partner NavBar test', 'Continuous Learning'];
  document.getElementById('tabs').innerHTML = tabs.map((t, i) => `
    <div class="relative -mr-6 h-[50px] w-[275px] shrink-0 ${i === 9 ? 'z-10 -mb-[2px]' : ''}">
      <svg class="absolute inset-0" width="275" height="50" fill="${i === 9 ? '#ececec' : '#d2d2d3'}"><use href="#tab"/></svg>
      <div class="relative flex h-full items-center pt-[2px] pl-[40px]">
        ${i === 3 ? '<b class="-ml-1 w-[33px] text-[27px] tracking-[-3px] text-[#222]">ca</b>' : '<svg class="mr-[9px]" width="20" height="28"><use href="#page"/></svg>'}
        <span class="w-[149px] overflow-hidden ${t.length > 9 ? '[mask-image:linear-gradient(to_right,black_70%,transparent)]' : 'tracking-[0.1px]'}">${t}</span>
        <svg class="ml-[9px]" width="16" height="16"><use href="#x"/></svg>
      </div>
    </div>`).join('');

  const rows = [['Advanced Core and WAN Specialization', 40, 50, 2], ['Express Video Specialization', 50, 60, 1], ['Master Cloud Builder Specialization', 60, 50, 0]];
  document.getElementById('rows').innerHTML = rows.map(([name, have, need, alerts], i) => `
    <div class="flex h-[68px] items-start border-2 border-[#ccc] bg-white pl-[10px] pr-[10px] text-[43px] leading-[55px] tracking-[0.3px] shadow-[6px_6px_8px_#888]">
      <svg class="mt-[20px]" width="22" height="22" fill="${i ? '#394b57' : '#00557f'}"><use href="#plus"/></svg>
      <span class="w-2">${i ? '' : '<i class="block mt-[42px] h-[2px] bg-[#00557f]"></i>'}</span>
      <span class="flex-1">${name}</span>
      <span class="text-[38px] leading-[54px] tracking-[0.8px] text-[#808080]"><span class="text-[34px] ${have < need ? 'text-[red]' : 'text-[green]'}">${have}</span>/${need}</span>
      <b class="ml-[24px] mt-[14px] h-[38px] w-[34px] rounded-[17px] text-center text-[25px] leading-[37px] text-white ${alerts ? 'bg-[#dc143c]' : 'bg-[#008000]'}">${alerts}</b>
    </div>`).join('');
</script>
</body>
</html>
